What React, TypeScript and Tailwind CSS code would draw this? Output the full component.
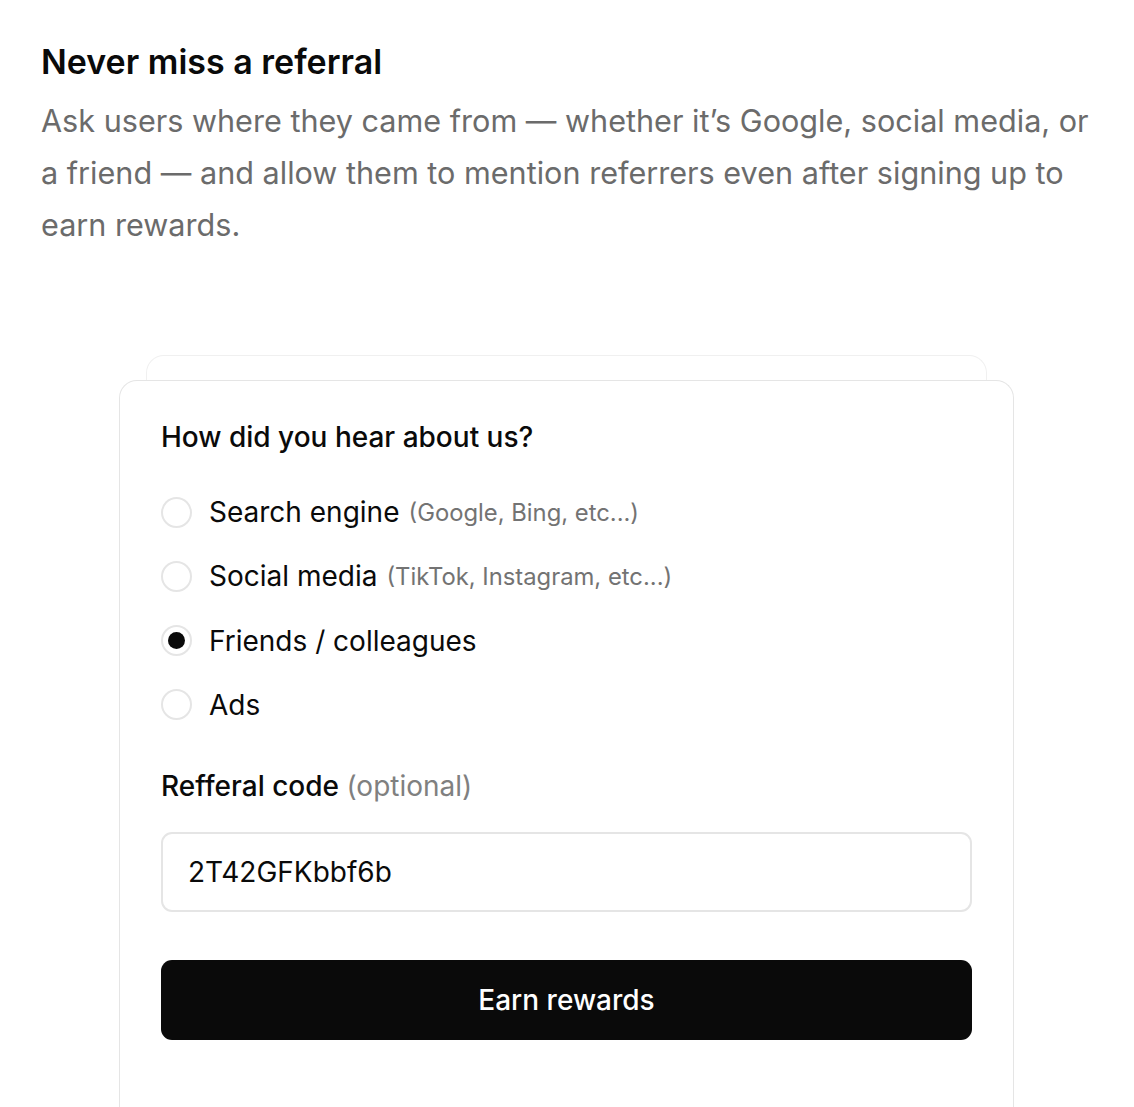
import React from "react";

const options = [
  { label: "Search engine", hint: "(Google, Bing, etc...)", checked: false },
  { label: "Social media", hint: "(TikTok, Instagram, etc...)", checked: false },
  { label: "Friends / colleagues", hint: "", checked: true },
  { label: "Ads", hint: "", checked: false },
];

export default function App() {
  return (
    <div
      className="w-[1134px] h-[1107px] overflow-hidden bg-white"
      style={{ fontFamily: "Inter, 'Noto Sans', sans-serif" }}
    >
      <div className="px-[41px] pt-[40px]">
        <h1 className="text-[34px] leading-[44px] font-semibold text-[#0a0a0a]">
          Never miss a referral
        </h1>
        <p className="mt-[11px] text-[30.6px] leading-[52px] text-[#6b6b6b]">
          Ask users where they came from — whether it’s Google, social media, or a friend — and allow them to mention referrers even after signing up to earn rewards.
        </p>
      </div>

      <div className="mt-[104px] pl-[119px] flex flex-col">
        <div className="ml-[27px] w-[841px] h-[26px] rounded-t-[18px] border border-b-0 border-[#f0f0f0] bg-white" />
        <div className="w-[895px] -mt-[1px] rounded-t-[18px] border border-b-0 border-[#e5e5e5] bg-white px-[41px] pt-[38px] pb-[80px]">
          <div className="text-[28px] leading-[36px] font-medium text-[#0a0a0a]">
            How did you hear about us?
          </div>
          <div className="mt-[37px] flex flex-col gap-[24.3px]">
            {options.map((o) => (
              <div key={o.label} className="flex items-center h-[40px]">
                <div className="w-[31px] h-[31px] rounded-full border-2 border-[#e5e5e5] flex items-center justify-center shrink-0">
                  {o.checked && <div className="w-[17px] h-[17px] rounded-full bg-[#0a0a0a]" />}
                </div>
                <span className="ml-[17px] text-[28px] text-[#0a0a0a]">{o.label}</span>
                {o.hint && (
                  <span className="ml-[9px] text-[23.8px] text-[#737373] mt-[2px]">{o.hint}</span>
                )}
              </div>
            ))}
          </div>
          <div className="mt-[43px] text-[28px] leading-[36px] font-medium text-[#0a0a0a]">
            Refferal code <span className="font-normal text-[#808080]">(optional)</span>
          </div>
          <div className="mt-[28px] h-[80px] rounded-[11px] border-2 border-[#e5e5e5] flex items-center px-[25px] text-[28px] text-[#0a0a0a]">
            2T42GFKbbf6b
          </div>
          <button className="mt-[48px] w-full h-[80px] rounded-[11px] bg-[#0a0a0a] text-white text-[28px] font-medium flex items-center justify-center">
            Earn rewards
          </button>
        </div>
      </div>
    </div>
  );
}
